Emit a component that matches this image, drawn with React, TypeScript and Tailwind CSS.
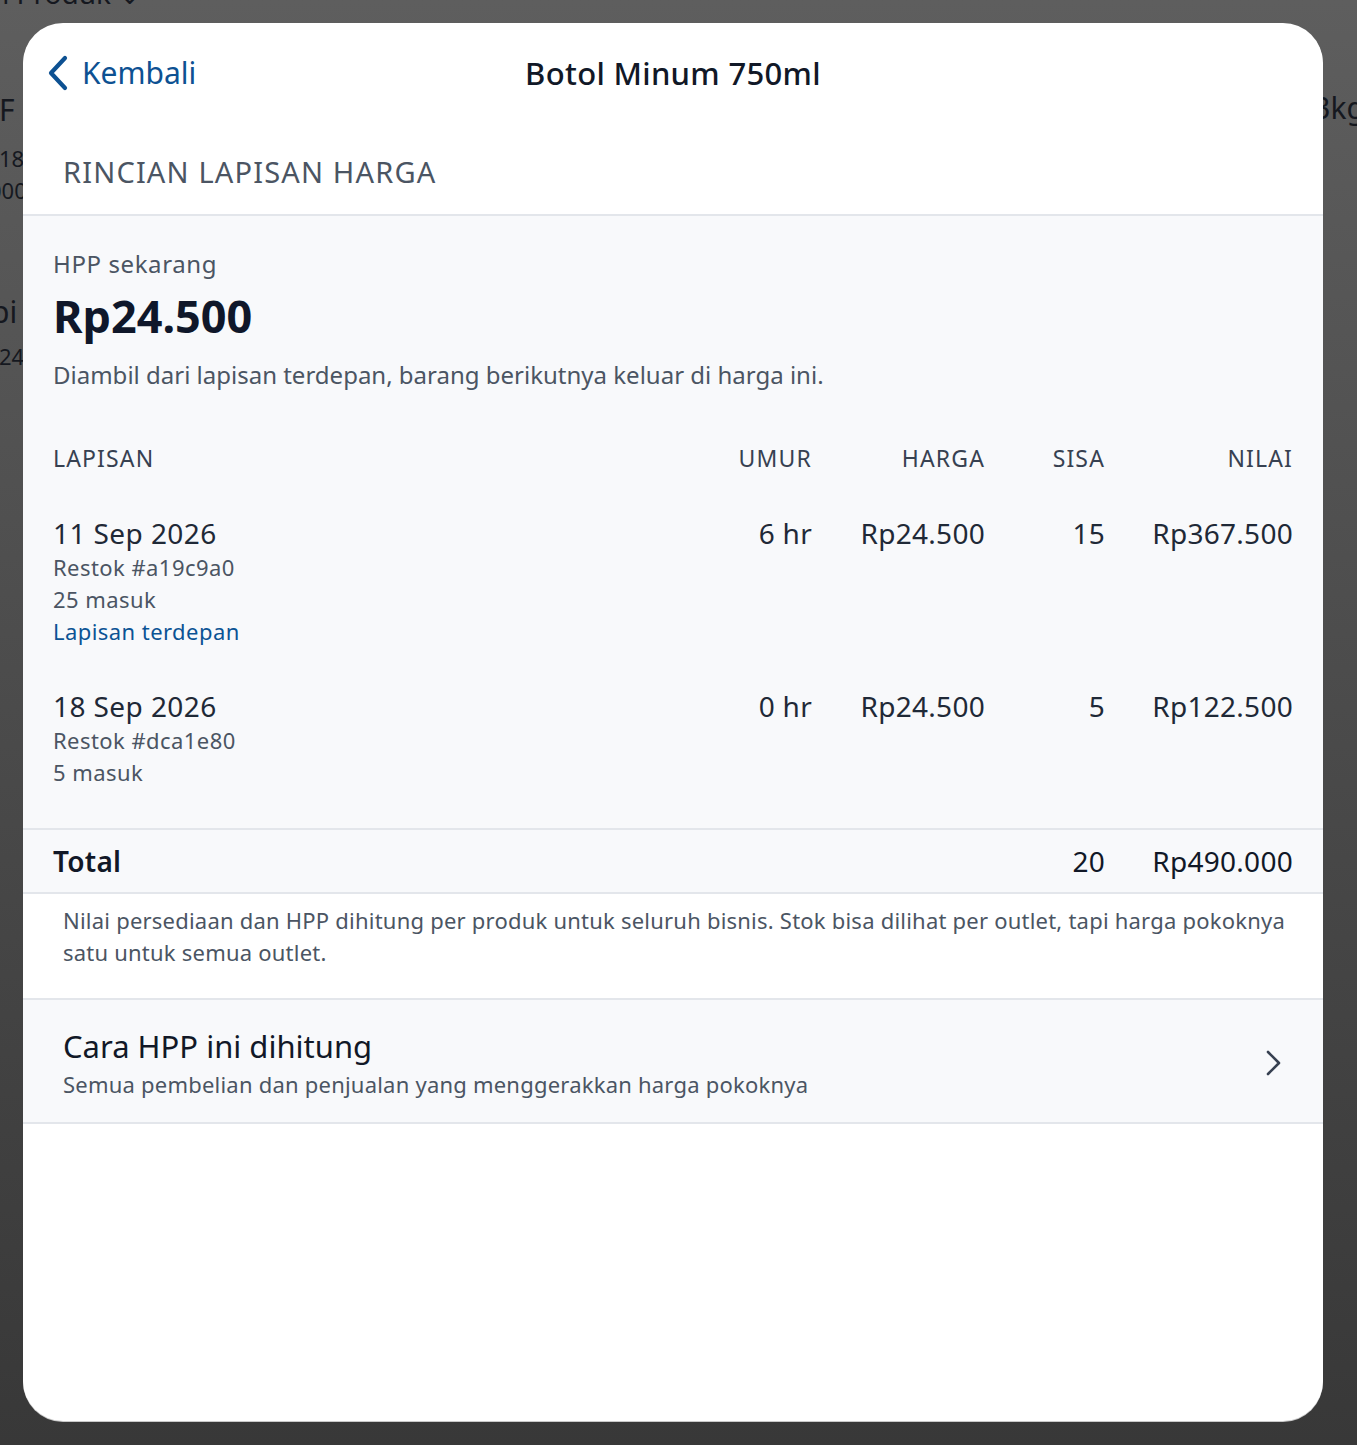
const layers = [
  {
    date: "11 Sep 2026",
    ref: "Restok #a19c9a0",
    masuk: "25 masuk",
    front: true,
    umur: "6 hr",
    harga: "Rp24.500",
    sisa: "15",
    nilai: "Rp367.500",
  },
  {
    date: "18 Sep 2026",
    ref: "Restok #dca1e80",
    masuk: "5 masuk",
    front: false,
    umur: "0 hr",
    harga: "Rp24.500",
    sisa: "5",
    nilai: "Rp122.500",
  },
];

const cols = "grid grid-cols-[1fr_120px_173px_120px_188px]";

function BackChevron() {
  return (
    <svg width="22" height="36" viewBox="0 0 22 36" fill="none">
      <polyline
        points="18,3 4,18 18,33"
        stroke="#0d5192"
        strokeWidth="4.2"
        strokeLinecap="round"
        strokeLinejoin="round"
      />
    </svg>
  );
}

function RowChevron() {
  return (
    <svg width="18" height="26" viewBox="0 0 18 26" fill="none">
      <polyline
        points="3,2 14,13 3,24"
        stroke="#374151"
        strokeWidth="2.6"
        strokeLinecap="round"
        strokeLinejoin="round"
      />
    </svg>
  );
}

export default function App() {
  return (
    <div className="relative h-[1445px] w-full overflow-hidden bg-gradient-to-b from-[#5e5e5e] to-[#383838] font-['Noto_Sans','Lato',sans-serif]">
      {/* page behind the sheet */}
      <div className="text-[#15181f]">
        <div className="-mt-[24px] -ml-[8px] text-[28px] leading-[34px]">n Produk ⌄</div>
        <div className="flex justify-between">
          <div className="-ml-[1px] pt-[82px]">
            <div className="text-[30px] leading-[36px]">F</div>
            <div className="mt-[14px] text-[22px] leading-[32px]">18</div>
            <div className="-ml-[10px] text-[22px] leading-[32px]">000</div>
            <div className="mt-[88px] -ml-[8px] text-[30px] leading-[36px]">pi</div>
            <div className="mt-[10px] text-[22px] leading-[32px]">24</div>
          </div>
          <div className="pt-[80px] -mr-[8px] text-[30px] leading-[36px]">3kg</div>
        </div>
      </div>

      {/* sheet */}
      <div className="absolute left-[23px] top-[23px] flex h-[1398px] w-[1300px] flex-col overflow-hidden rounded-[40px] bg-white shadow-[0_1px_0_#c9c9c9]">
        <header className="relative flex h-[100px] items-center justify-center">
          <button className="absolute left-[24px] top-[32px] flex items-center gap-[13px] text-[30px] leading-[36px] text-[#0d5192]">
            <BackChevron />
            <span>Kembali</span>
          </button>
          <h1 className="text-[31px] font-medium leading-[36px] tracking-[0.01em] text-[#111827]">Botol Minum 750ml</h1>
        </header>

        <div className="border-b-2 border-[#e3e6eb] px-[40px] pt-[32px] pb-[25px] text-[29px] leading-[34px] tracking-[0.04em] text-[#4b5563]">
          RINCIAN LAPISAN HARGA
        </div>

        <section className="border-b-2 border-[#e3e6eb] bg-[#f8f9fb] px-[30px] pt-[32px] pb-[40px]">
          <p className="text-[24px] leading-[32px] tracking-[0.025em] text-[#4b5563]">HPP sekarang</p>
          <p className="mt-[10px] text-[45px] font-bold leading-[52px] text-[#0f172a]">Rp24.500</p>
          <p className="mt-[17px] text-[24px] leading-[32px] text-[#4b5563]">
            Diambil dari lapisan terdepan, barang berikutnya keluar di harga ini.
          </p>

          <div className={`${cols} mt-[53px] text-[23px] leading-[28px] tracking-[0.05em] text-[#374151]`}>
            <span>LAPISAN</span>
            <span className="text-right">UMUR</span>
            <span className="text-right">HARGA</span>
            <span className="text-right">SISA</span>
            <span className="text-right">NILAI</span>
          </div>

          <div className="mt-[43px] flex flex-col gap-[41px]">
            {layers.map((l) => (
              <div key={l.date} className={`${cols} items-start text-[28px] leading-[36px] tracking-[0.01em] text-[#1f2937]`}>
                <div className="flex flex-col">
                  <span className="tracking-[0.015em]">{l.date}</span>
                  <div className="text-[22px] leading-[32px] tracking-[0.02em] text-[#4b5563]">
                    <div>{l.ref}</div>
                    <div>{l.masuk}</div>
                    {l.front && <div className="text-[#0b5394]">Lapisan terdepan</div>}
                  </div>
                </div>
                <span className="text-right">{l.umur}</span>
                <span className="text-right">{l.harga}</span>
                <span className="text-right">{l.sisa}</span>
                <span className="text-right">{l.nilai}</span>
              </div>
            ))}
          </div>
        </section>

        <div className={`${cols} h-[64px] items-center border-b-2 border-[#e3e6eb] bg-[#f8f9fb] px-[30px] text-[28px] leading-[36px] tracking-[0.01em] text-[#111827]`}>
          <span className="font-semibold">Total</span>
          <span />
          <span />
          <span className="text-right">20</span>
          <span className="text-right">Rp490.000</span>
        </div>

        <p className="border-b-2 border-[#e3e6eb] pl-[40px] pr-[30px] pt-[10px] pb-[30px] text-[22px] leading-[32px] tracking-[0.01em] text-[#4b5563]">
          Nilai persediaan dan HPP dihitung per produk untuk seluruh bisnis. Stok bisa dilihat per outlet, tapi harga pokoknya
          satu untuk semua outlet.
        </p>

        <div className="flex items-center justify-between border-b-2 border-[#e3e6eb] bg-[#f8f9fb] pl-[40px] pr-[40px] pt-[27px] pb-[24px]">
          <div className="flex flex-col gap-[5px]">
            <span className="text-[31px] leading-[38px] text-[#111827]">Cara HPP ini dihitung</span>
            <span className="text-[22px] leading-[28px] tracking-[0.01em] text-[#4b5563]">
              Semua pembelian dan penjualan yang menggerakkan harga pokoknya
            </span>
          </div>
          <RowChevron />
        </div>

        <div className="flex-1" />
      </div>
    </div>
  );
}
